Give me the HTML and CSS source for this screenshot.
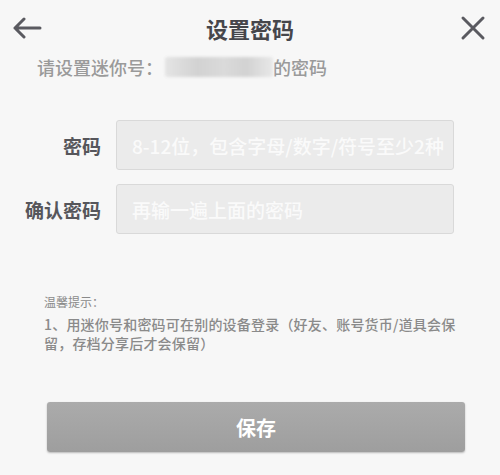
FILE: index.html
```html
<!DOCTYPE html>
<html lang="zh-CN">
<head>
  <meta charset="UTF-8" />
  <meta name="viewport" content="width=device-width, initial-scale=1.0" />
  <title>设置密码</title>
  <link rel="stylesheet" href="styles.css">
</head>
<body>

  <div class="header">
    <button class="icon-button" aria-label="返回">
      <svg width="30" height="22" viewBox="0 0 30 22">
        <path d="M28 11 H3 M12 2 L3 11 L12 20" fill="none" stroke="#5a5a60" stroke-width="3" stroke-linecap="round" stroke-linejoin="round"/>
      </svg>
    </button>
    <div class="title">设置密码</div>
    <button class="icon-button" aria-label="关闭">
      <svg width="26" height="26" viewBox="0 0 26 26">
        <path d="M3 3 L23 23 M23 3 L3 23" fill="none" stroke="#5a5a60" stroke-width="3" stroke-linecap="round"/>
      </svg>
    </button>
  </div>

  <div class="subtitle">请设置迷你号：<span class="masked"></span>的密码</div>

  <div class="form">
    <div class="row">
      <label class="label">密码</label>
      <div class="field">8-12位，包含字母/数字/符号至少2种</div>
    </div>
    <div class="row">
      <label class="label">确认密码</label>
      <div class="field">再输一遍上面的密码</div>
    </div>
  </div>

  <div class="tips">
    <div class="tips-title">温馨提示：</div>
    <div class="tips-text">1、用迷你号和密码可在别的设备登录（好友、账号货币/道具会保留，存档分享后才会保留）</div>
  </div>

  <button class="save">保存</button>

</body>
</html>
```

FILE: styles.css
```css
* {
  box-sizing: border-box;
}

html, body {
  margin: 0;
  padding: 0;
  height: 100%;
  background-color: #f7f7f7;
  font-family: "Noto Sans CJK SC", "Noto Sans", sans-serif;
}

.header {
  display: flex;
  align-items: center;
  justify-content: space-between;
  height: 54px;
  padding: 2px 12px 0 12px;
}

.icon-button {
  background: none;
  border: none;
  padding: 0;
  width: 30px;
  height: 26px;
  display: flex;
  align-items: center;
  justify-content: center;
  cursor: pointer;
}

.title {
  font-size: 22px;
  font-weight: bold;
  color: #46464b;
}

.subtitle {
  display: flex;
  align-items: center;
  padding-left: 37px;
  margin-top: -2px;
  font-size: 18px;
  font-weight: 500;
  color: #9a9a9a;
  height: 30px;
}

.masked {
  display: inline-block;
  width: 108px;
  height: 20px;
  margin-left: 2px;
  border-radius: 3px;
  background: linear-gradient(90deg, #e4e4e4, #d2d2d2 30%, #dadada 55%, #d2d2d2 75%, #e8e8e8);
  filter: blur(1.5px);
}

.form {
  margin-top: 38px;
  display: flex;
  flex-direction: column;
  gap: 14px;
}

.row {
  display: flex;
  align-items: center;
}

.label {
  width: 101px;
  text-align: right;
  font-size: 19px;
  font-weight: bold;
  color: #56565b;
}

.field {
  margin-left: 15px;
  width: 338px;
  height: 50px;
  display: flex;
  align-items: center;
  padding-left: 15px;
  background: #ebebeb;
  border: 1px solid #d9d9d9;
  border-radius: 3px;
  font-size: 19px;
  font-weight: 500;
  color: #fafafa;
  white-space: nowrap;
}

.tips {
  margin-top: 58px;
  padding: 0 40px 0 44px;
  color: #8a8a8a;
}

.tips-title {
  font-size: 12px;
  line-height: 20px;
}

.tips-text {
  font-size: 14px;
  line-height: 19px;
  margin-top: 3px;
  font-weight: 500;
  letter-spacing: 0.2px;
}

.save {
  display: block;
  margin: 49px 0 0 47px;
  width: 418px;
  height: 50px;
  background: linear-gradient(#ababab, #9e9e9e);
  border: none;
  border-radius: 3px;
  box-shadow: 0 1px 2px rgba(0, 0, 0, 0.25);
  color: #ffffff;
  font-family: inherit;
  font-size: 20px;
  font-weight: bold;
  cursor: pointer;
}
```
